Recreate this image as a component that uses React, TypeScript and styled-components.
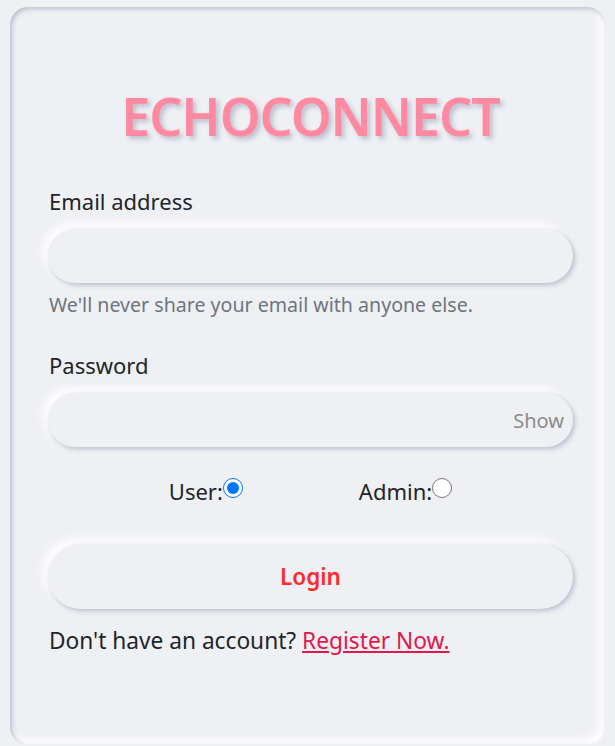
import React from "react";
import styled, { createGlobalStyle } from "styled-components";

const GlobalStyle = createGlobalStyle`
  html, body {
    margin: 0;
    padding: 0;
    background: #eff0f4;
  }
  body {
    font-family: "Noto Sans", "Open Sans", "DejaVu Sans", sans-serif;
    color: #212529;
  }
  * { box-sizing: border-box; }
`;

const Page = styled.div`
  padding: 7px 10px 0 10px;
`;

const Card = styled.div`
  height: 738px;
  border-radius: 18px;
  background: #eff0f4;
  box-shadow: inset 2px 2px 5px #babecc, inset -5px -5px 10px #ffffff;
  padding: 73px 32px 0 38px;
  display: flex;
  flex-direction: column;
`;

const Title = styled.h1`
  margin: 0 0 31px 0;
  text-align: center;
  font-size: 52px;
  line-height: 72px;
  font-weight: 600;
  color: #ff89a1;
  text-shadow: 3px 3px 5px #babecc;
  letter-spacing: -1px;
`;

const Field = styled.div<{ $mt: number }>`
  display: flex;
  flex-direction: column;
  margin-top: ${(p) => p.$mt}px;
`;

const Label = styled.label`
  font-size: 22px;
  line-height: 36px;
  margin-bottom: 10px;
  padding-left: 1px;
`;

const InputWrap = styled.div`
  position: relative;
`;

const Input = styled.input`
  display: block;
  width: 100%;
  height: 54px;
  border: none;
  outline: none;
  border-radius: 27px;
  background: #eff0f4;
  box-shadow: 2px 2px 5px #babecc, -5px -5px 10px #ffffff;
  padding: 0 24px;
  font-size: 21px;
  font-family: inherit;
`;

const Show = styled.span`
  position: absolute;
  right: 9px;
  top: 50%;
  transform: translateY(-50%);
  font-size: 20px;
  color: #8a8a8a;
`;

const Help = styled.div`
  margin-top: 6px;
  font-size: 19.6px;
  line-height: 31px;
  color: #6c757d;
  padding-left: 1px;
`;

const RoleRow = styled.div`
  display: flex;
  justify-content: center;
  gap: 116px;
  margin-top: 26px;
  font-size: 22px;
  line-height: 36px;
`;

const Role = styled.label`
  display: flex;
  align-items: center;
`;

const Radio = styled.input`
  width: 20px;
  height: 20px;
  margin: 0 0 6px 0;
`;

const LoginButton = styled.button`
  margin-top: 35px;
  height: 65px;
  width: 100%;
  border: none;
  border-radius: 33px;
  background: #eff0f4;
  box-shadow: 2px 2px 5px #babecc, -5px -5px 10px #ffffff;
  color: #ff2b2b;
  font-family: inherit;
  font-size: 22.5px;
  font-weight: 600;
  cursor: pointer;
`;

const Footer = styled.p`
  margin: 14px 0 0 1px;
  font-size: 22.7px;
  line-height: 36px;
`;

const RegisterLink = styled.a`
  color: #e3174a;
  text-decoration: underline;
`;

export default function App() {
  return (
    <>
      <GlobalStyle />
      <Page>
        <Card>
          <Title>ECHOCONNECT</Title>
          <Field $mt={0}>
            <Label>Email address</Label>
            <Input type="email" />
            <Help>We'll never share your email with anyone else.</Help>
          </Field>
          <Field $mt={27}>
            <Label>Password</Label>
            <InputWrap>
              <Input type="password" />
              <Show>Show</Show>
            </InputWrap>
          </Field>
          <RoleRow>
            <Role>
              User:
              <Radio type="radio" name="role" defaultChecked />
            </Role>
            <Role>
              Admin:
              <Radio type="radio" name="role" />
            </Role>
          </RoleRow>
          <LoginButton>Login</LoginButton>
          <Footer>
            Don't have an account? <RegisterLink href="#">Register Now.</RegisterLink>
          </Footer>
        </Card>
      </Page>
    </>
  );
}
